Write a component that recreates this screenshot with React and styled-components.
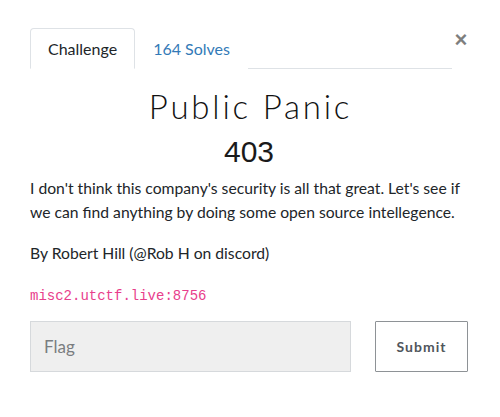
import styled, { createGlobalStyle } from 'styled-components'

const GlobalStyle = createGlobalStyle`
body {
  margin: 0;
  background: #fff;
  font-family: Lato, "Liberation Sans", sans-serif;
  color: #212529;
}
`

const Modal = styled.div`
padding: 28px 32px 0 30px;
`

const Header = styled.div`
display: flex;
align-items: flex-start;
`

const Tabs = styled.div`
flex: 1;
display: flex;
border-bottom: 1px solid #dee2e6;
`

const Tab = styled.div`
height: 41px;
box-sizing: border-box;
padding: 0 17px;
display: flex;
align-items: center;
font-size: 16px;
margin-bottom: -1px;
border: 1px solid ${props => props.active ? '#dee2e6' : 'transparent'};
border-bottom-color: ${props => props.active ? '#fff' : 'transparent'};
border-radius: 4px 4px 0 0;
background: #fff;
color: ${props => props.active ? '#212529' : '#337ab7'};
`

const Close = styled.button`
width: 14px;
border: none;
background: none;
padding: 0;
margin-left: 2px;
margin-top: 1px;
font-family: "Liberation Sans", sans-serif;
font-size: 22px;
font-weight: 700;
line-height: 1;
color: #000;
opacity: 0.5;
cursor: pointer;
`

const Title = styled.h2`
margin: 17px 0 0;
padding-left: 3px;
text-align: center;
font-family: Lato, sans-serif;
font-weight: 300;
font-size: 33px;
letter-spacing: 2.8px;
line-height: 40px;
color: #111;
`

const Value = styled.h3`
margin: 6px 0 0;
text-align: center;
font-family: "Liberation Sans", sans-serif;
font-weight: 400;
font-size: 30px;
line-height: 40px;
color: #1a1a1a;
`

const Description = styled.div`
margin-top: 4px;
font-size: 15.7px;
line-height: 24px;

p {
  margin: 0 0 17px;
}

p:last-child {
  margin-bottom: 0;
}
`

const Code = styled.code`
font-family: "Liberation Mono", monospace;
font-size: 14px;
color: #e83e8c;
`

const Form = styled.form`
display: flex;
gap: 24px;
margin-top: 13px;
`

const FlagInput = styled.input`
width: 321px;
height: 51px;
box-sizing: border-box;
padding: 0 13px;
background: #efefef;
border: 1px solid #d6d9dc;
font-family: Lato, sans-serif;
font-size: 17px;
outline: none;

&::placeholder {
  color: #7a7d80;
}
`

const SubmitButton = styled.button`
width: 93px;
height: 51px;
box-sizing: border-box;
background: #fff;
border: 1px solid #8e9296;
border-radius: 1px;
font-family: Lato, sans-serif;
font-weight: 700;
font-size: 14px;
letter-spacing: 1px;
color: #50565c;
cursor: pointer;
`

const App = () => {
    return (
        <>
            <GlobalStyle />
            <Modal>
                <Header>
                    <Tabs>
                        <Tab active>Challenge</Tab>
                        <Tab>164 Solves</Tab>
                    </Tabs>
                    <Close>×</Close>
                </Header>
                <Title>Public Panic</Title>
                <Value>403</Value>
                <Description>
                    <p>I don't think this company's security is all that great. Let's see if we can find anything by doing some open source intellegence.</p>
                    <p>By Robert Hill (@Rob H on discord)</p>
                    <p><Code>misc2.utctf.live:8756</Code></p>
                </Description>
                <Form onSubmit={e => e.preventDefault()}>
                    <FlagInput placeholder="Flag" />
                    <SubmitButton>Submit</SubmitButton>
                </Form>
            </Modal>
        </>
    )
}

export default App
